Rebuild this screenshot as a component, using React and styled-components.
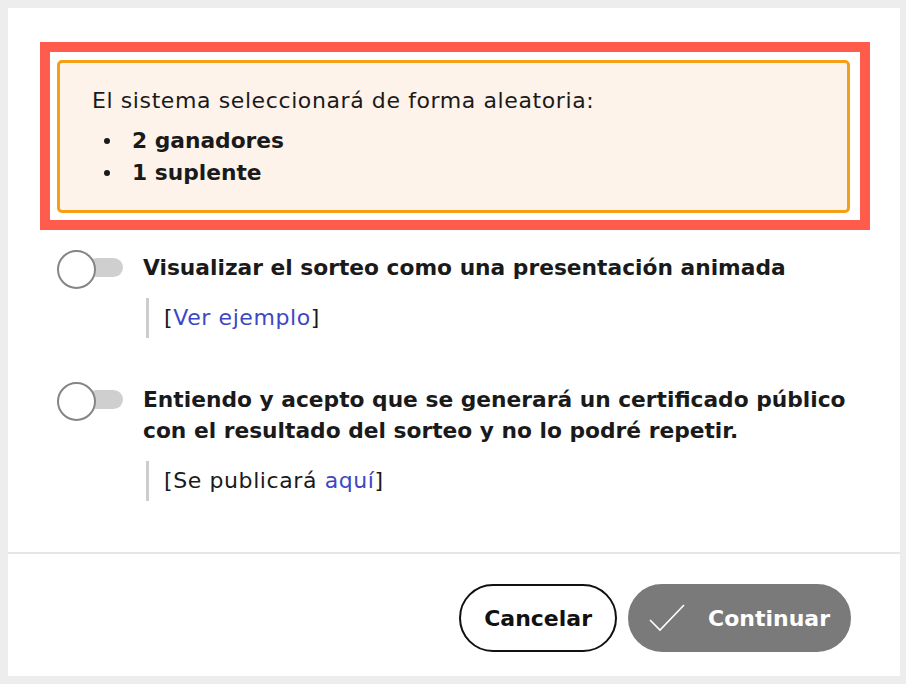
import React from 'react';
import styled, { createGlobalStyle } from 'styled-components';

const GlobalStyle = createGlobalStyle`
  html, body {
    margin: 0;
    padding: 0;
    background: #ededed;
  }
  body {
    padding: 8px 6px 8px 8px;
    font-family: "DejaVu Sans", "Noto Sans", sans-serif;
    color: #1a1a1a;
  }
  * { box-sizing: border-box; }
`;

const Panel = styled.div`
  display: flex;
  flex-direction: column;
  height: 668px;
  background: #fff;
`;

const Body = styled.div`
  flex: 1;
  padding: 34px 30px 0 32px;
`;

const Highlight = styled.div`
  border: 10px solid #ff5c4d;
  padding: 8px 10px 7px 7px;
`;

const Notice = styled.div`
  border: 3px solid #f59f16;
  border-radius: 5px;
  background: #fdf3ea;
  padding: 22px 32px 21px 32px;
  font-size: 22px;
  letter-spacing: 0.6px;
  line-height: 32px;
`;

const List = styled.ul`
  margin: 8px 0 0;
  padding-left: 12px;
  list-style: none;
  font-size: 21.75px;
  font-weight: 700;
  letter-spacing: 0;
`;

const Item = styled.li`
  display: flex;
  align-items: center;
  gap: 22px;

  &::before {
    content: '';
    width: 6px;
    height: 6px;
    border-radius: 50%;
    background: #1a1a1a;
  }
`;

const Options = styled.div`
  display: flex;
  flex-direction: column;
  gap: 46px;
  padding: 22px 0 0 17px;
`;

const Option = styled.div`
  display: grid;
  grid-template-columns: 66px 1fr;
  column-gap: 20px;
`;

const ToggleCell = styled.div`
  height: 31px;
  display: flex;
  align-items: center;
`;

const Toggle = styled.span`
  position: relative;
  display: block;
  width: 66px;
  height: 19px;

  &::before {
    content: '';
    position: absolute;
    left: 30px;
    right: 0;
    top: 0;
    bottom: 0;
    border-radius: 10px;
    background: #cfcfcf;
  }

  &::after {
    content: '';
    position: absolute;
    left: 0;
    top: -8px;
    width: 35px;
    height: 35px;
    border-radius: 50%;
    background: #fff;
    border: 2px solid #858585;
  }
`;

const Title = styled.div`
  font-size: 21.75px;
  font-weight: 700;
  line-height: 31px;
`;

const Note = styled.div`
  margin: 15px 0 0 3px;
  border-left: 3px solid #cdcdcd;
  padding: 4px 0 4px 15px;
  font-size: 22px;
  letter-spacing: 0.6px;
  line-height: 32px;
`;

const Link = styled.a`
  color: #3d47c4;
  text-decoration: none;
`;

const Divider = styled.hr`
  margin: 0;
  border: none;
  height: 2px;
  background: #e6e6e6;
`;

const Footer = styled.div`
  display: flex;
  justify-content: flex-end;
  gap: 11px;
  padding: 30px 49px 24px 0;
`;

const Button = styled.button`
  display: flex;
  align-items: center;
  gap: 23px;
  height: 68px;
  border-radius: 34px;
  font-family: inherit;
  font-size: 22px;
  font-weight: 700;
  padding: ${(p) => (p.$primary ? '0 19px 0 19px' : '0 23px')};
  border: 2px solid ${(p) => (p.$primary ? '#7a7a7a' : '#111')};
  background: ${(p) => (p.$primary ? '#7a7a7a' : '#fff')};
  color: ${(p) => (p.$primary ? '#fff' : '#111')};
`;

const CheckIcon = () => (
  <svg width="36" height="28" viewBox="0 0 36 28" fill="none">
    <path d="M1 16 L11 26 L35 1" stroke="#fff" strokeWidth="1.6" />
  </svg>
);

export default function App() {
  return (
    <>
      <GlobalStyle />
      <Panel>
        <Body>
          <Highlight>
            <Notice>
              El sistema seleccionará de forma aleatoria:
              <List>
                <Item>2 ganadores</Item>
                <Item>1 suplente</Item>
              </List>
            </Notice>
          </Highlight>
          <Options>
            <Option>
              <ToggleCell>
                <Toggle />
              </ToggleCell>
              <div>
                <Title>Visualizar el sorteo como una presentación animada</Title>
                <Note>
                  [<Link href="#">Ver ejemplo</Link>]
                </Note>
              </div>
            </Option>
            <Option>
              <ToggleCell>
                <Toggle />
              </ToggleCell>
              <div>
                <Title>
                  Entiendo y acepto que se generará un certificado público
                  <br />
                  con el resultado del sorteo y no lo podré repetir.
                </Title>
                <Note>
                  [Se publicará <Link href="#">aquí</Link>]
                </Note>
              </div>
            </Option>
          </Options>
        </Body>
        <Divider />
        <Footer>
          <Button>Cancelar</Button>
          <Button $primary>
            <CheckIcon />
            Continuar
          </Button>
        </Footer>
      </Panel>
    </>
  );
}
